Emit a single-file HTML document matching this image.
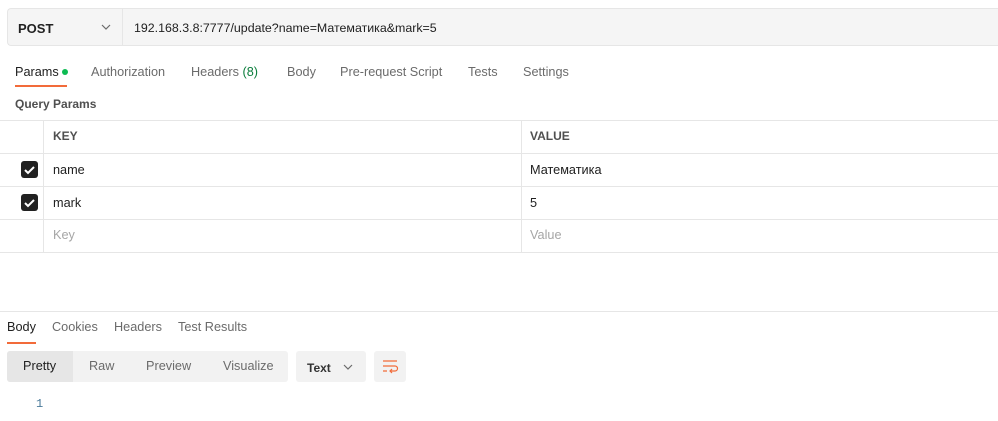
<!DOCTYPE html><html><head><style>
body{margin:0;width:998px;height:421px;background:#fff;font-family:"Liberation Sans",sans-serif;font-size:12.7px;color:#212121;position:relative;overflow:hidden}
.a{position:absolute;white-space:nowrap}
.line{position:absolute;background:#e6e6e6}
.cb{position:absolute;left:21px;width:17px;height:17px;background:#212121;border-radius:3px}
.tab{color:#6b6b6b}
</style></head><body>
<div class="a" style="left:7px;top:8px;width:991px;height:38px;background:#f5f5f5;border:1px solid #e6e6e6;border-right:none;border-radius:4px 0 0 4px;box-sizing:border-box"></div>
<div class="line" style="left:122px;top:9px;width:1px;height:37px"></div>
<div class="a" style="left:18px;top:21px;font-weight:bold;font-size:13px">POST</div>
<svg class="a" style="left:101px;top:24px" width="10" height="7"><path d="M1 1l4 4 4-4" stroke="#6b6b6b" fill="none" stroke-width="1.2"/></svg>
<div class="a" style="left:134px;top:21px;font-size:12.4px">192.168.3.8:7777/update?name=Математика&amp;mark=5</div>
<div class="a" style="left:15px;top:65px">Params <span style="display:inline-block;width:6px;height:6px;border-radius:3px;background:#0cbb52;vertical-align:middle;margin-bottom:2px"></span></div>
<div class="a" style="left:15px;top:85px;width:52px;height:2px;background:#f26b3a"></div>
<div class="a tab" style="left:91px;top:65px">Authorization</div>
<div class="a tab" style="left:191px;top:65px">Headers <span style="color:#0a7d3b">(8)</span></div>
<div class="a tab" style="left:287px;top:65px">Body</div>
<div class="a tab" style="left:340px;top:65px">Pre-request Script</div>
<div class="a tab" style="left:468px;top:65px">Tests</div>
<div class="a tab" style="left:523px;top:65px">Settings</div>
<div class="a" style="left:15px;top:97px;font-weight:bold;color:#505050;font-size:12px">Query Params</div>
<div class="line" style="left:0;top:120px;width:998px;height:1px"></div>
<div class="line" style="left:0;top:153px;width:998px;height:1px"></div>
<div class="line" style="left:0;top:186px;width:998px;height:1px"></div>
<div class="line" style="left:0;top:219px;width:998px;height:1px"></div>
<div class="line" style="left:0;top:252px;width:998px;height:1px"></div>
<div class="line" style="left:43px;top:120px;width:1px;height:133px"></div>
<div class="line" style="left:521px;top:120px;width:1px;height:133px"></div>
<div class="a" style="left:53px;top:129px;font-weight:bold;color:#505050;font-size:12px">KEY</div>
<div class="a" style="left:530px;top:129px;font-weight:bold;color:#505050;font-size:12px">VALUE</div>
<div class="cb" style="top:161px"><svg width="17" height="17"><path d="M4 9l3 3 6-6" stroke="#fff" stroke-width="2" fill="none"/></svg></div>
<div class="cb" style="top:194px"><svg width="17" height="17"><path d="M4 9l3 3 6-6" stroke="#fff" stroke-width="2" fill="none"/></svg></div>
<div class="a" style="left:53px;top:163px">name</div>
<div class="a" style="left:530px;top:163px">Математика</div>
<div class="a" style="left:53px;top:196px">mark</div>
<div class="a" style="left:530px;top:196px">5</div>
<div class="a" style="left:53px;top:228px;color:#a6a6a6">Key</div>
<div class="a" style="left:530px;top:228px;color:#a6a6a6">Value</div>
<div class="line" style="left:0;top:311px;width:998px;height:1px"></div>
<div class="a" style="left:7px;top:320px">Body</div>
<div class="a" style="left:7px;top:342px;width:29px;height:2px;background:#f26b3a"></div>
<div class="a tab" style="left:52px;top:320px">Cookies</div>
<div class="a tab" style="left:114px;top:320px">Headers</div>
<div class="a tab" style="left:178px;top:320px">Test Results</div>
<div class="a" style="left:7px;top:351px;width:281px;height:31px;background:#f2f2f2;border-radius:3px"></div>
<div class="a" style="left:7px;top:351px;width:66px;height:31px;background:#e6e6e6;border-radius:3px 0 0 3px"></div>
<div class="a" style="left:23px;top:359px">Pretty</div>
<div class="a tab" style="left:89px;top:359px">Raw</div>
<div class="a tab" style="left:146px;top:359px">Preview</div>
<div class="a tab" style="left:223px;top:359px">Visualize</div>
<div class="a" style="left:296px;top:351px;width:70px;height:31px;background:#f2f2f2;border-radius:3px"></div>
<div class="a" style="left:307px;top:361px;font-size:12px;font-weight:bold;color:#333">Text</div>
<svg class="a" style="left:343px;top:364px" width="10" height="7"><path d="M1 1l4 4 4-4" stroke="#6b6b6b" fill="none" stroke-width="1.2"/></svg>
<div class="a" style="left:374px;top:351px;width:32px;height:31px;background:#f2f2f2;border-radius:3px"></div>
<svg class="a" style="left:382px;top:359px" width="17" height="15"><path d="M1 2h14M1 7h12a2.5 2.5 0 0 1 0 5H8M10 10l-2 2 2 2M1 12h4" stroke="#f26b3a" fill="none" stroke-width="1.2"/></svg>
<div class="a" style="left:36px;top:397px;color:#4a7a9a;font-family:'Liberation Mono',monospace;font-size:12px">1</div>
</body></html>
